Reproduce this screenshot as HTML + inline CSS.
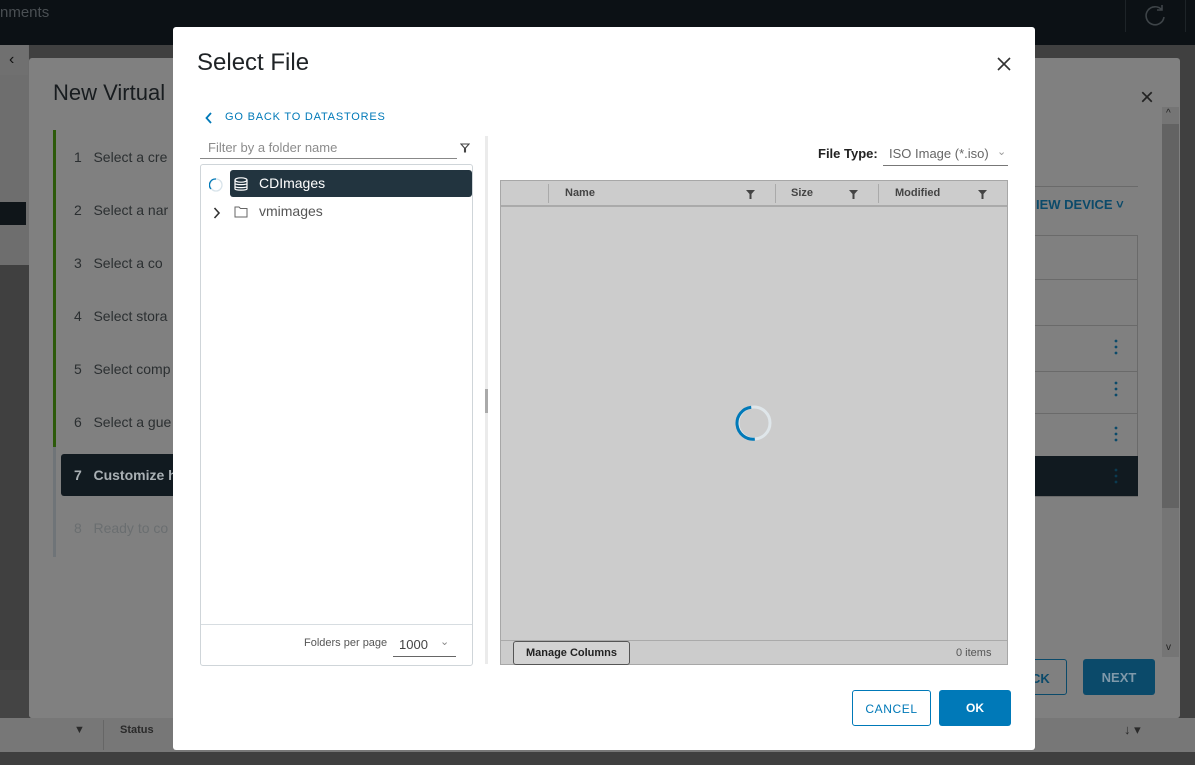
<!DOCTYPE html>
<html><head><style>
*{box-sizing:border-box;margin:0;padding:0}
body{width:1195px;height:765px;overflow:hidden;position:relative;background:#404040;font-family:"Liberation Sans",sans-serif}
.a{position:absolute}
.dots{position:absolute;width:4px;height:16px}
</style></head><body>
<div class="a" style="left:0;top:0;width:1195px;height:45px;background:#0c1115"></div>
<div class="a" style="left:0;top:4px;color:#4a4f53;font-size:15px">nments</div>
<div class="a" style="left:1125px;top:0;width:1px;height:32px;background:#1e2428"></div>
<div class="a" style="left:1185px;top:0;width:1px;height:32px;background:#1e2428"></div>
<svg class="a" style="left:1142px;top:2px" width="26" height="26" viewBox="0 0 26 26"><path d="M20 8A9 9 0 1 0 22 15M20 3V8H15" fill="none" stroke="#3e4448" stroke-width="1.6"/></svg>
<div class="a" style="left:0;top:45px;width:29px;height:220px;background:#6e6e6e"></div>
<div class="a" style="left:0;top:45px;width:28px;height:30px;background:#707070;color:#111;font-size:16px;padding:6px 0 0 9px">&lsaquo;</div>
<div class="a" style="left:0;top:202px;width:26px;height:23px;background:#0f1519"></div>
<div class="a" style="left:0;top:670px;width:29px;height:48px;background:#444"></div>
<!-- wizard -->
<div class="a" style="left:29px;top:58px;width:1151px;height:660px;background:#808080;border-radius:3px"></div>
<div class="a" style="left:53px;top:80px;font-size:22px;color:#181c1f">New Virtual</div>
<div class="a" style="left:1140px;top:84px;font-size:24px;color:#222">×</div>
<div class="a" style="left:53px;top:130px;width:3px;height:317px;background:#2c5a0a"></div>
<div class="a" style="left:53px;top:447px;width:3px;height:110px;background:#6f7478"></div>
<div class="a" style="left:74px;top:131px;font-size:14px;color:#2b2f31;line-height:53px">1&nbsp;&nbsp;&nbsp;Select a cre<br>2&nbsp;&nbsp;&nbsp;Select a nar<br>3&nbsp;&nbsp;&nbsp;Select a co<br>4&nbsp;&nbsp;&nbsp;Select stora<br>5&nbsp;&nbsp;&nbsp;Select comp<br>6&nbsp;&nbsp;&nbsp;Select a gue</div>
<div class="a" style="left:61px;top:454px;width:120px;height:42px;background:#111a20;border-radius:3px;color:#a9b0b4;font-size:14px;font-weight:bold;padding:13px 0 0 13px">7&nbsp;&nbsp;&nbsp;Customize h</div>
<div class="a" style="left:74px;top:520px;font-size:14px;color:#6a6e70">8&nbsp;&nbsp;&nbsp;Ready to co</div>
<div class="a" style="left:1035px;top:186px;width:103px;height:1px;background:#6a6a6a"></div>
<div class="a" style="left:1036px;top:197px;font-size:13px;color:#0b4a6a;font-weight:bold">IEW DEVICE ˅</div>
<div class="a" style="left:1035px;top:235px;width:103px;height:262px;border:1px solid #6a6a6a;border-left:none"></div>
<div class="a" style="left:1035px;top:279px;width:103px;height:1px;background:#6a6a6a"></div>
<div class="a" style="left:1035px;top:325px;width:103px;height:1px;background:#6a6a6a"></div>
<div class="a" style="left:1035px;top:371px;width:103px;height:1px;background:#6a6a6a"></div>
<div class="a" style="left:1035px;top:413px;width:103px;height:1px;background:#6a6a6a"></div>
<div class="a" style="left:1035px;top:456px;width:103px;height:40px;background:#111a20"></div>
<svg class="dots" style="left:1114px;top:339px"><circle cx="2" cy="2" r="1.4" fill="#0b4a6a"/><circle cx="2" cy="8" r="1.4" fill="#0b4a6a"/><circle cx="2" cy="14" r="1.4" fill="#0b4a6a"/></svg>
<svg class="dots" style="left:1114px;top:381px"><circle cx="2" cy="2" r="1.4" fill="#0b4a6a"/><circle cx="2" cy="8" r="1.4" fill="#0b4a6a"/><circle cx="2" cy="14" r="1.4" fill="#0b4a6a"/></svg>
<svg class="dots" style="left:1114px;top:426px"><circle cx="2" cy="2" r="1.4" fill="#0b4a6a"/><circle cx="2" cy="8" r="1.4" fill="#0b4a6a"/><circle cx="2" cy="14" r="1.4" fill="#0b4a6a"/></svg>
<svg class="dots" style="left:1114px;top:468px"><circle cx="2" cy="2" r="1.4" fill="#0b3a50"/><circle cx="2" cy="8" r="1.4" fill="#0b3a50"/><circle cx="2" cy="14" r="1.4" fill="#0b3a50"/></svg>
<div class="a" style="left:1162px;top:107px;width:17px;height:550px;background:#757575"></div>
<div class="a" style="left:1162px;top:124px;width:17px;height:384px;background:#636363"></div>
<div class="a" style="left:1166px;top:108px;font-size:10px;color:#222">^</div>
<div class="a" style="left:1166px;top:642px;font-size:10px;color:#222">v</div>
<div class="a" style="left:1030px;top:659px;width:37px;height:36px;border:1px solid #0b4a6a;border-radius:3px;color:#0b4a6a;font-size:13px;font-weight:bold;padding:11px 0 0 0">CK</div>
<div class="a" style="left:1083px;top:659px;width:72px;height:36px;background:#0b4a6a;border-radius:3px;color:#7f99aa;font-size:13px;font-weight:bold;text-align:center;padding-top:11px">NEXT</div>
<div class="a" style="left:0;top:718px;width:1195px;height:34px;background:#777"></div>
<div class="a" style="left:29px;top:708px;width:1151px;height:10px;background:#808080;border-radius:0 0 3px 3px"></div>
<div class="a" style="left:103px;top:720px;width:1px;height:30px;background:#666"></div>
<div class="a" style="left:120px;top:724px;font-size:11px;color:#2a2a2a;font-weight:bold">Status</div>
<div class="a" style="left:74px;top:724px;font-size:11px;color:#2a2a2a">▼</div>
<div class="a" style="left:1124px;top:722px;font-size:13px;color:#2a2a2a">↓ ▾</div>
<div class="a" style="left:0;top:752px;width:1195px;height:13px;background:#3f3f3f"></div>
<!-- dialog -->
<div class="a" style="left:173px;top:27px;width:862px;height:723px;background:#fff;border-radius:3px"></div>
<div class="a" style="left:197px;top:49px;font-size:24px;color:#1f2326">Select File</div>
<svg class="a" style="left:996px;top:56px" width="16" height="16"><path d="M2 2L14 14M14 2L2 14" stroke="#333" stroke-width="1.6"/></svg>
<svg class="a" style="left:205px;top:112px" width="8" height="12"><path d="M6 1L1.5 6L6 11" fill="none" stroke="#0079b8" stroke-width="1.8"/></svg>
<div class="a" style="left:225px;top:111px;font-size:11px;color:#0079b8;letter-spacing:.8px">GO BACK TO DATASTORES</div>
<div class="a" style="left:208px;top:140px;font-size:13px;color:#8c8c8c">Filter by a folder name</div>
<div class="a" style="left:200px;top:158px;width:257px;height:1px;background:#888"></div>
<svg class="a" style="left:460px;top:143px" width="10" height="10"><path d="M1 1H9L5.5 5V9L4.5 9V5Z" fill="none" stroke="#444" stroke-width="1.1"/></svg>
<div class="a" style="left:200px;top:164px;width:273px;height:502px;border:1px solid #cfd5d9;border-radius:3px"></div>
<div class="a" style="left:201px;top:624px;width:271px;height:1px;background:#d7dde1"></div>
<svg class="a" style="left:209px;top:178px" width="14" height="14"><circle cx="7" cy="7" r="6" fill="none" stroke="#d8e3ea" stroke-width="1.3"/><path d="M7 1A6 6 0 0 0 2 11" fill="none" stroke="#0079b8" stroke-width="1.3"/></svg>
<div class="a" style="left:230px;top:170px;width:242px;height:27px;background:#22343f;border-radius:3px"></div>
<svg class="a" style="left:234px;top:177px" width="14" height="15"><ellipse cx="7" cy="3" rx="6" ry="2.2" fill="none" stroke="#fff" stroke-width="1.2"/><path d="M1 3V12C1 13.5 13 13.5 13 12V3M1 6.5C1 8 13 8 13 6.5M1 9.5C1 11 13 11 13 9.5" fill="none" stroke="#fff" stroke-width="1.2"/></svg>
<div class="a" style="left:259px;top:175px;font-size:14px;color:#fff">CDImages</div>
<svg class="a" style="left:213px;top:207px" width="8" height="12"><path d="M1.5 1L6 6L1.5 11" fill="none" stroke="#333" stroke-width="1.6"/></svg>
<svg class="a" style="left:234px;top:205px" width="14" height="13"><path d="M1 2H5L6.5 3.5H13V12H1Z" fill="none" stroke="#666" stroke-width="1"/></svg>
<div class="a" style="left:259px;top:203px;font-size:14px;color:#565656">vmimages</div>
<div class="a" style="left:304px;top:637px;font-size:11px;color:#565656">Folders per page</div>
<div class="a" style="left:399px;top:637px;font-size:13px;color:#444">1000</div>
<div class="a" style="left:440px;top:635px;font-size:11px;color:#888">⌄</div>
<div class="a" style="left:393px;top:656px;width:63px;height:1px;background:#666"></div>
<div class="a" style="left:485px;top:136px;width:3px;height:528px;background:#ebebeb"></div>
<div class="a" style="left:485px;top:389px;width:3px;height:24px;background:#aaa"></div>
<div class="a" style="left:818px;top:146px;font-size:13px;color:#222;font-weight:bold">File Type:</div>
<div class="a" style="left:889px;top:146px;font-size:13px;color:#666">ISO Image (*.iso)</div>
<div class="a" style="left:997px;top:145px;font-size:11px;color:#999">⌄</div>
<div class="a" style="left:883px;top:165px;width:125px;height:1px;background:#777"></div>
<div class="a" style="left:500px;top:180px;width:508px;height:485px;background:#cccccc;border:1px solid #a7a7a7"></div>
<div class="a" style="left:501px;top:205px;width:506px;height:2px;background:#aaa"></div>
<div class="a" style="left:548px;top:184px;width:1px;height:19px;background:#aaa"></div>
<div class="a" style="left:775px;top:184px;width:1px;height:19px;background:#aaa"></div>
<div class="a" style="left:878px;top:184px;width:1px;height:19px;background:#aaa"></div>
<div class="a" style="left:565px;top:187px;font-size:11px;color:#444;font-weight:bold">Name</div>
<div class="a" style="left:791px;top:187px;font-size:11px;color:#444;font-weight:bold">Size</div>
<div class="a" style="left:895px;top:187px;font-size:11px;color:#444;font-weight:bold">Modified</div>
<svg class="a" style="left:746px;top:190px" width="10" height="10"><path d="M0 0H9L5.5 4V9H3.5V4Z" fill="#444"/></svg>
<svg class="a" style="left:849px;top:190px" width="10" height="10"><path d="M0 0H9L5.5 4V9H3.5V4Z" fill="#444"/></svg>
<svg class="a" style="left:978px;top:190px" width="10" height="10"><path d="M0 0H9L5.5 4V9H3.5V4Z" fill="#444"/></svg>
<svg class="a" style="left:735px;top:404px" width="38" height="38"><circle cx="19" cy="19" r="16" fill="none" stroke="#dfe6ea" stroke-width="3"/><path d="M19 3A16 16 0 0 0 17 35" fill="none" stroke="#0079b8" stroke-width="3" transform="rotate(-10 19 19)"/></svg>
<div class="a" style="left:501px;top:640px;width:506px;height:1px;background:#aaa"></div>
<div class="a" style="left:513px;top:641px;width:117px;height:24px;border:1px solid #555;border-radius:3px;background:#d3d3d3;font-size:11px;color:#222;text-align:center;padding-top:5px;font-weight:bold">Manage Columns</div>
<div class="a" style="left:956px;top:647px;font-size:11px;color:#555">0 items</div>
<div class="a" style="left:852px;top:690px;width:79px;height:36px;border:1px solid #0079b8;border-radius:3px;color:#0079b8;font-size:12px;text-align:center;padding-top:11px;letter-spacing:.6px">CANCEL</div>
<div class="a" style="left:939px;top:690px;width:72px;height:36px;background:#0079b8;border-radius:3px;color:#fff;font-size:12px;text-align:center;padding-top:11px;font-weight:bold">OK</div>
</body></html>
